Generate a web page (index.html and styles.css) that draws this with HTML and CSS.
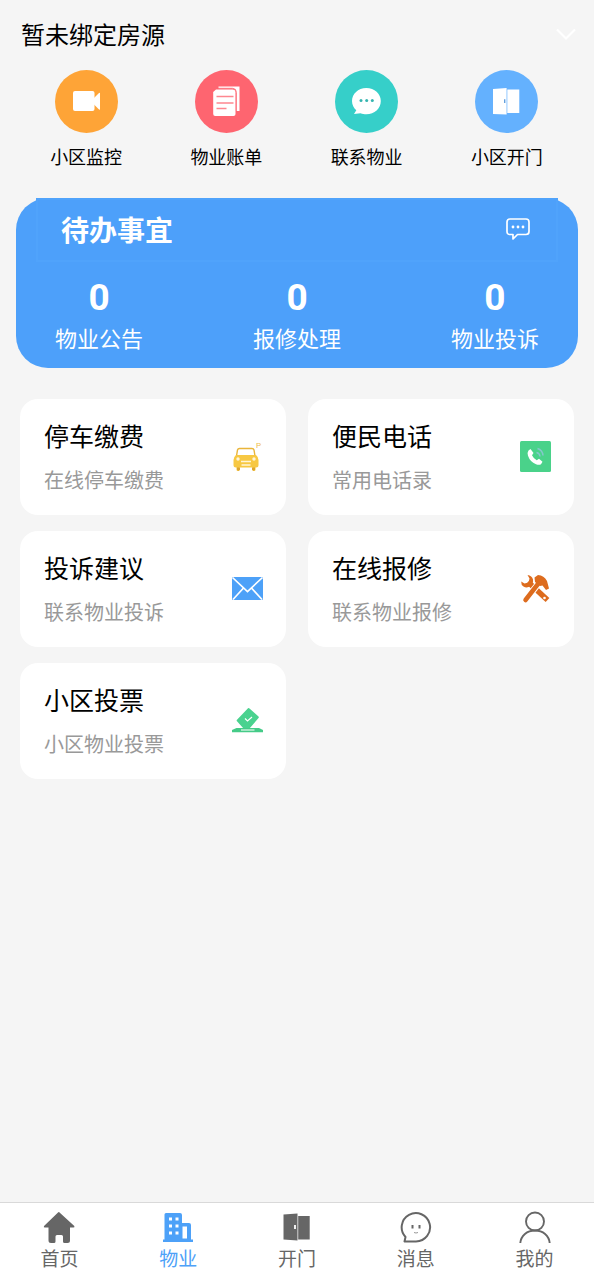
FILE: index.html
```html
<!DOCTYPE html>
<html lang="zh-CN">
<head>
<meta charset="utf-8">
<meta name="viewport" content="width=device-width, initial-scale=1">
<title>物业</title>
<link rel="stylesheet" href="styles.css">
</head>
<body>
<main class="content">
  <button class="house" type="button">
    <span>暂未绑定房源</span>
    <svg class="house-arrow" viewBox="0 0 24 24"><path d="M3 7.500l9 9 9-9" fill="none" stroke="#fff" stroke-width="2.200"/></svg>
  </button>

  <nav class="quick">
    <a class="quick-item" href="#monitor">
      <svg class="quick-icon" viewBox="0 0 63 63"><circle cx="31.500" cy="31.500" r="31.500" fill="#fea437"/><rect x="18" y="21" width="21.500" height="20" rx="2" fill="#fff"/><path d="M38.500 28.500l5-5q1-1 1.500-.5v16.500q-.5.500-1.500-.5l-5-5z" fill="#fff"/></svg>
      <span>小区监控</span>
    </a>
    <a class="quick-item" href="#bill">
      <svg class="quick-icon" viewBox="0 0 63 63"><circle cx="31.500" cy="31.500" r="31.500" fill="#fe6570"/><path d="M23.500 16.500h21V41H41V22.500q0-4-4-4H23.500z" fill="#fff"/><path d="M21 19.500h16.500q3 0 3 3V44q0 2-2 2H20.200q-2 0-2-2V22z" fill="#fff"/><path d="M21.500 26.500h17M21.500 33h17M21.500 38.500h10" stroke="#fe8790" stroke-width="1.300"/><path d="M22 18.300h15.500q3.900.200 3.900 4V41" fill="none" stroke="#fe6570" stroke-width=".9"/></svg>
      <span>物业账单</span>
    </a>
    <a class="quick-item" href="#contact">
      <svg class="quick-icon" viewBox="0 0 63 63"><circle cx="31.500" cy="31.500" r="31.500" fill="#36cfc9"/><path d="M31.300 18C23 18 17 24 17 31c0 4 1.800 7 4.300 9.300L19 44l6.500-.8c2 .8 3.800 1.100 5.800 1.100 8.300 0 14.500-6 14.500-13.300S39.600 18 31.300 18z" fill="#fff"/><g fill="#36b5b0"><circle cx="26" cy="30.600" r="1.500"/><circle cx="31.700" cy="30.600" r="1.500"/><circle cx="37.300" cy="30.600" r="1.500"/></g></svg>
      <span>联系物业</span>
    </a>
    <a class="quick-item" href="#door">
      <svg class="quick-icon" viewBox="0 0 63 63"><circle cx="31.500" cy="31.500" r="31.500" fill="#64b1fe"/><path d="M18 19l13.600-1v26.500L18 44zM32.300 19.500h12V43h-12z" fill="#fff"/><path d="M29.700 29.300v3.600" stroke="#64a0dc" stroke-width="1.400"/></svg>
      <span>小区开门</span>
    </a>
  </nav>

  <section class="todo">
    <header class="todo-head">
      <h2 class="todo-title">待办事宜</h2>
      <svg class="todo-icon" viewBox="0 0 24 24"><path d="M4 2h16q3 0 3 3v9.500q0 3-3 3h-8.500L7 22v-4.500H4q-3 0-3-3V5q0-3 3-3z" fill="none" stroke="#fff" stroke-width="1.700" stroke-linejoin="round"/><g fill="#fff"><circle cx="7" cy="10" r="1.400"/><circle cx="12" cy="10" r="1.400"/><circle cx="17" cy="10" r="1.400"/></g></svg>
    </header>
    <div class="stats">
      <a class="stat" href="#notice"><strong class="stat-number">0</strong><span>物业公告</span></a>
      <a class="stat" href="#repairs"><strong class="stat-number">0</strong><span>报修处理</span></a>
      <a class="stat" href="#complaints"><strong class="stat-number">0</strong><span>物业投诉</span></a>
    </div>
  </section>

  <section class="services">
    <a class="service" href="#parking">
      <span class="service-text"><span class="service-name">停车缴费</span><span class="service-note">在线停车缴费</span></span>
      <svg class="service-icon" viewBox="0 0 32 32"><path d="M5.500 15l1-6q.4-1.500 2-1.500h12.500q1.600 0 2 1.500l1 6" fill="none" stroke="#e9b53a" stroke-width="1.400"/><path d="M5 14h20q2.500 2 2.500 5v5q0 2.500-2.500 2.500h-.5v2q0 1.500-1.500 1.500t-1.500-1.500v-2h-13v2q0 1.500-1.500 1.500t-1.500-1.500v-2H5q-2.500 0-2.500-2.500v-5q0-3 2.500-5z" fill="#f7c843"/><path d="M6 26.500h3v2.200q-1.500 2-3 0zM21 26.500h3v2.200q-1.500 2-3 0z" fill="#dda52e"/><path d="M10 20.500h10M10.500 24h9" stroke="#fff5d8" stroke-width="1.300"/><circle cx="7" cy="18" r="1.700" fill="#fff5d8"/><circle cx="23" cy="18" r="1.700" fill="#fff5d8"/><text class="parking-mark" x="25" y="7">P</text></svg>
    </a>
    <a class="service" href="#phones">
      <span class="service-text"><span class="service-name">便民电话</span><span class="service-note">常用电话录</span></span>
      <svg class="service-icon" viewBox="0 0 32 32"><rect x="1" width="31" height="31" rx="1.500" fill="#4ad28a"/><path d="M9.500 9.500l2-1.500 3 4-1.500 2.200q1.500 3.300 4.700 5l2.300-1.500 3.500 3-1.500 2.500q-2 1.200-5 0-6-2.500-8-8.500-1-3.200.5-5.200z" fill="#fff"/><path d="M17.500 11.500q3 .5 3.500 4M18.500 7.500q5 1.500 5.500 7" fill="none" stroke="#84c7cb" stroke-width="1.500"/></svg>
    </a>
    <a class="service" href="#suggest">
      <span class="service-text"><span class="service-name">投诉建议</span><span class="service-note">联系物业投诉</span></span>
      <svg class="service-icon" viewBox="0 0 32 32"><rect x="1" y="4" width="31" height="23" rx="1" fill="#4da1f8"/><path d="M1.500 4.500l15 14 15-14M2 26.500l10.500-11.500M31 26.500L20.500 15" fill="none" stroke="#fff" stroke-width="1.700"/></svg>
    </a>
    <a class="service" href="#repair">
      <span class="service-text"><span class="service-name">在线报修</span><span class="service-note">联系物业报修</span></span>
      <svg class="service-icon" viewBox="0 0 32 32"><path d="M9 9L28.500 27" stroke="#dd6c1e" stroke-width="5.500"/><path d="M8.500 2q4.500.5 5.500 4.500.5 4-2.500 6.500-3.500 2.500-7 .5Q2 12 2.200 8.500L5.500 10.500 9.500 9.500 10.500 5.500z" fill="#dd6c1e"/><path d="M7 26.500L19.500 10.500" stroke="#fff" stroke-width="6.500"/><path d="M6.500 27L20.500 9" stroke="#dd6c1e" stroke-width="4.500" stroke-linecap="round"/><path d="M15.500 4.500L19 2q6 .5 9 6l2 7.500-3 1.500-3.500-4.500-2.500.500-5-4z" fill="#dd6c1e"/><circle cx="25.500" cy="25" r="1.300" fill="#fff"/></svg>
    </a>
    <a class="service" href="#vote">
      <span class="service-text"><span class="service-name">小区投票</span><span class="service-note">小区物业投票</span></span>
      <svg class="service-icon" viewBox="0 0 32 32"><path d="M17 3.300q.8-.6 1.500.1l9 8q.7.800 0 1.600l-9 10.500h-6L6 16.300q-.7-.8 0-1.500z" fill="#4ad28f"/><path d="M14 13.500l2.500 2.500 4.500-4" fill="none" stroke="#fff" stroke-width="1.200"/><path d="M5.500 23h22.500l4 2v2.300H1V25z" fill="#45cb88"/><path d="M10 25h13.500" stroke="#c4efd8" stroke-width="1.500"/></svg>
    </a>
  </section>
</main>

<nav class="tabbar">
  <a class="tab" href="#home">
    <svg class="tab-icon" viewBox="0 0 32 32"><path d="M16 1l15.300 14q.7 1.500-1 1.500H27V29.500q0 2.500-2.500 2.500h-3q-1.500 0-1.500-1.500v-5q0-1.500-1.500-1.500h-4.500q-1.500 0-1.500 1.500v5q0 1.500-1.500 1.500h-3Q5.500 32 5.500 29.500v-13H2q-1.800 0-1-1.500L14.500 2q.8-1 1.500-1z" fill="#666"/></svg>
    <span>首页</span>
  </a>
  <a class="tab tab-active" href="#property" aria-current="page">
    <svg class="tab-icon" viewBox="0 0 32 32"><path d="M4 2h14q2 0 2 2v8h7q2 0 2 2v14.500h2V31H1v-2.500h1.500V3.500Q2.500 2 4 2z" fill="#4da1f8"/><path d="M7 6.500h3v3H7zM13.500 6.500h3v3h-3zM7 13.500h3v3H7zM13.500 13.500h3v3h-3zM7 20.500h3v3H7zM13.500 20.500h3v3h-3zM20.500 15.500h4.500v12h-4.500z" fill="#fff"/></svg>
    <span>物业</span>
  </a>
  <a class="tab" href="#open">
    <svg class="tab-icon" viewBox="0 0 32 32"><path d="M2.500 3.500l14-1v27l-14-1zM17.200 5h11.500v23.500H17.200z" fill="#666"/><path d="M14 14v4" stroke="#fff" stroke-width="1.800"/></svg>
    <span>开门</span>
  </a>
  <a class="tab" href="#messages">
    <svg class="tab-icon" viewBox="0 0 32 32"><path d="M4.500 30.500h11.500A14.200 14.200 0 1 0 5.500 26z" fill="none" stroke="#666" stroke-width="2" stroke-linejoin="round"/><path d="M12.500 14v3.500M19.500 14v3.500" stroke="#666" stroke-width="2"/><path d="M14 21.500q2 1 4 0" fill="none" stroke="#999"/></svg>
    <span>消息</span>
  </a>
  <a class="tab" href="#me">
    <svg class="tab-icon" viewBox="0 0 32 32"><g fill="none" stroke="#666" stroke-width="1.900"><circle cx="16" cy="10.500" r="9"/><path d="M1.300 32C2 24.500 8 19.500 16 19.500S30 24.500 30.700 32"/></g></svg>
    <span>我的</span>
  </a>
</nav>
</body>
</html>
```
FILE: styles.css
```css
* {
  box-sizing: border-box;
}

body {
  margin: 0;
  min-height: 100vh;
  display: flex;
  flex-direction: column;
  background: #f5f5f5;
  color: #000;
  font-family: "Noto Sans CJK SC", sans-serif;
}

a {
  color: inherit;
  text-decoration: none;
}

svg {
  display: block;
  flex: none;
}

.content {
  flex: 1;
}

.house {
  display: flex;
  align-items: center;
  justify-content: space-between;
  width: 100%;
  padding: 0 16px 2px 21px;
  border: 0;
  background: none;
  color: inherit;
  font: inherit;
  font-size: 24px;
  line-height: 68px;
}

.house-arrow {
  width: 24px;
  height: 24px;
}

.quick {
  display: grid;
  grid-template-columns: repeat(4, 1fr);
  padding: 0 17px 0 16px;
}

.quick-item {
  display: flex;
  flex-direction: column;
  align-items: center;
  gap: 10px;
  font-size: 18px;
  line-height: 26px;
}

.quick-icon {
  width: 63px;
  height: 63px;
}

.todo {
  margin: 29px 16px 0;
  padding: 0 20px 14px;
  border-radius: 32px;
  background: #4da0fa;
  color: #fff;
}

.todo-head {
  display: flex;
  align-items: center;
  justify-content: space-between;
  height: 64px;
  padding: 0 26px 2px 23px;
  border: 2px solid #50a3fb;
  background: #4da0fa;
}

.todo-title {
  margin: 0;
  font-size: 28px;
  font-weight: 700;
  line-height: 40px;
}

.todo-icon {
  width: 24px;
  height: 24px;
}

.stats {
  display: flex;
  justify-content: space-between;
  padding: 14px 19px 0;
}

.stat {
  display: flex;
  flex-direction: column;
  align-items: center;
  font-size: 22px;
  line-height: 34px;
}

.stat-number {
  font-family: Roboto, "Noto Sans CJK SC", sans-serif;
  font-size: 37px;
  line-height: 44px;
}

.services {
  display: grid;
  grid-template-columns: repeat(2, 1fr);
  gap: 16px 22px;
  padding: 31px 20px;
}

.service {
  display: flex;
  align-items: center;
  justify-content: space-between;
  padding: 17px 23px 17px 24px;
  border-radius: 18px;
  background: #fff;
}

.service-text {
  display: flex;
  flex-direction: column;
  gap: 8px;
}

.service-name {
  font-size: 25px;
  line-height: 38px;
}

.service-note {
  color: #999;
  font-size: 20px;
  line-height: 36px;
}

.service-icon {
  width: 32px;
  height: 32px;
  overflow: visible;
}

.parking-mark {
  fill: #f0c050;
  font-family: Roboto, sans-serif;
  font-size: 8px;
}

.tabbar {
  display: grid;
  grid-template-columns: repeat(5, 1fr);
  padding: 8px 0;
  border-top: 1px solid #d9d9d9;
  background: #fff;
}

.tab {
  display: flex;
  flex-direction: column;
  align-items: center;
  gap: 1px;
  color: #666;
  font-size: 19px;
  line-height: 28px;
}

.tab-active {
  color: #4da1f8;
}

.tab-icon {
  width: 32px;
  height: 32px;
}
```
